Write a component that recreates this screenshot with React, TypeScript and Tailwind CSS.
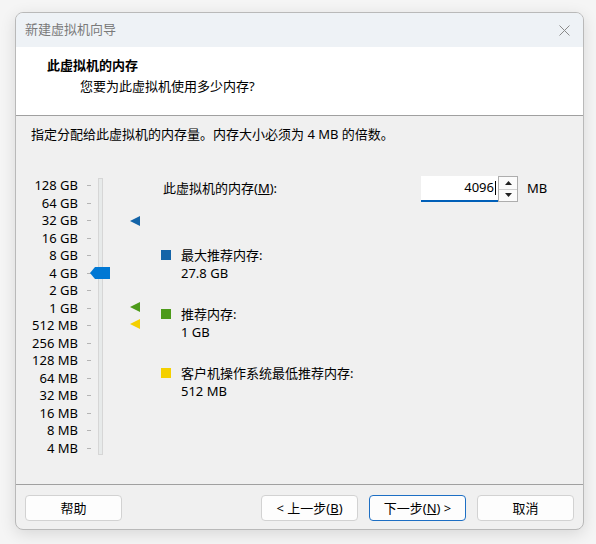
const FONT = "font-['Segoe_UI','Noto_Sans','Noto_Sans_CJK_SC',sans-serif]";

const scale = [
  '128 GB', '64 GB', '32 GB', '16 GB', '8 GB', '4 GB', '2 GB', '1 GB',
  '512 MB', '256 MB', '128 MB', '64 MB', '32 MB', '16 MB', '8 MB', '4 MB',
];

function Marker({ color, top }: { color: string; top: number }) {
  return (
    <svg className="absolute left-[115px]" style={{ top }} width="10" height="10" viewBox="0 0 10 10">
      <polygon points="0,5 10,0 10,10" fill={color} />
    </svg>
  );
}

function Slider() {
  return (
    <div className="relative w-[135px] pt-[1px]">
      {/* labels + ticks */}
      <div className="flex flex-col">
        {scale.map((s) => (
          <div key={s} className="flex h-[17.53px] items-center">
            <span className="w-[63px] text-right leading-none">{s}</span>
            <span className="ml-[9px] h-px w-[4px] bg-[#b4b4b4]" />
          </div>
        ))}
      </div>
      {/* track */}
      <div className="absolute left-[83px] top-[2px] h-[277px] w-[5px] border border-[#d6d6d6] bg-[#e7eaea]" />
      {/* thumb */}
      <svg className="absolute left-[75px] top-[91px]" width="20" height="12" viewBox="0 0 20 12">
        <polygon points="0,6 5,0 20,0 20,12 5,12" fill="#0078d4" />
      </svg>
      <Marker color="#1464a8" top={40} />
      <Marker color="#4c9a1a" top={126} />
      <Marker color="#f4d000" top={143} />
    </div>
  );
}

function Legend({ color, label, value }: { color: string; label: string; value: string }) {
  return (
    <div className="flex">
      <span className={`mt-[4px] h-[10px] w-[10px] ${color}`} />
      <div className="ml-[10px] flex flex-col leading-[18px]">
        <span>{label}</span>
        <span>{value}</span>
      </div>
    </div>
  );
}

function Btn({ children, primary }: { children: React.ReactNode; primary?: boolean }) {
  return (
    <button
      className={`h-[26px] w-[97px] rounded-[4px] border bg-[#fdfdfd] text-[13px] leading-none text-black ${
        primary ? 'border-[#1d6fc4]' : 'border-[#d2d2d2]'
      }`}
    >
      {children}
    </button>
  );
}

export default function App() {
  return (
    <div className={`h-[544px] w-[596px] bg-[#f5f5f5] pt-[12px] pl-[15px] text-[13px] text-black ${FONT}`}>
      <div className="flex h-[518px] w-[569px] flex-col overflow-hidden rounded-[8px] border border-[#b9b9b9] bg-[#f0f0f0] shadow-[0_4px_16px_rgba(0,0,0,0.12)]">
        {/* title bar */}
        <div className="flex h-[34px] shrink-0 items-center justify-between bg-[#eef2f6] pl-[9px] pr-[13px]">
          <span className="text-[13px] text-[#7a7a7a]">新建虚拟机向导</span>
          <svg width="11" height="11" viewBox="0 0 11 11">
            <path d="M0.5 0.5 L10.5 10.5 M10.5 0.5 L0.5 10.5" stroke="#8a8a8a" strokeWidth="1" />
          </svg>
        </div>

        {/* header */}
        <div className="h-[69px] shrink-0 border-b border-[#a0a0a0] bg-white pt-[9px] pl-[31px]">
          <div className="font-bold leading-[19px]">此虚拟机的内存</div>
          <div className="pl-[33px] leading-[22px]">您要为此虚拟机使用多少内存?</div>
        </div>

        {/* body */}
        <div className="flex-1 pt-[8px] pl-[15px]">
          <div className="leading-[20px]">指定分配给此虚拟机的内存量。内存大小必须为 4 MB 的倍数。</div>

          <div className="mt-[32px] flex">
            <div className="-ml-[16px]">
              <Slider />
            </div>

            <div className="ml-[13px] flex flex-col">
              <div className="flex h-[26px] items-center">
                <span className="w-[258px]">
                  此虚拟机的内存(<span className="underline">M</span>):
                </span>
                <div className="relative flex h-[26px] w-[77px] items-center justify-end border-b-2 border-[#005fb8] bg-white pr-[2px]">
                  <span>4096</span>
                  <span className="ml-px h-[14px] w-px bg-black" />
                </div>
                <div className="flex h-[26px] w-[20px] flex-col border border-[#adadad] bg-[#fbfbfb]">
                  <div className="flex flex-1 items-center justify-center border-b border-[#d0d0d0]">
                    <svg width="7" height="4" viewBox="0 0 7 4"><polygon points="0,4 3.5,0 7,4" fill="#222" /></svg>
                  </div>
                  <div className="flex flex-1 items-center justify-center">
                    <svg width="7" height="4" viewBox="0 0 7 4"><polygon points="0,0 3.5,4 7,0" fill="#222" /></svg>
                  </div>
                </div>
                <span className="ml-[9px]">MB</span>
              </div>

              <div className="-ml-[2px] mt-[44px] flex flex-col gap-[23px]">
                <Legend color="bg-[#1464a8]" label="最大推荐内存:" value="27.8 GB" />
                <Legend color="bg-[#4c9a1a]" label="推荐内存:" value="1 GB" />
                <Legend color="bg-[#f4d000]" label="客户机操作系统最低推荐内存:" value="512 MB" />
              </div>
            </div>
          </div>
        </div>

        {/* footer */}
        <div className="flex h-[45px] shrink-0 items-start border-t border-[#a0a0a0] pt-[10px] pl-[9px]">
          <Btn>帮助</Btn>
          <div className="ml-[139px] flex gap-[11px]">
            <Btn>&lt; 上一步(<span className="underline">B</span>)</Btn>
            <Btn primary>下一步(<span className="underline">N</span>) &gt;</Btn>
            <Btn>取消</Btn>
          </div>
        </div>
      </div>
    </div>
  );
}
